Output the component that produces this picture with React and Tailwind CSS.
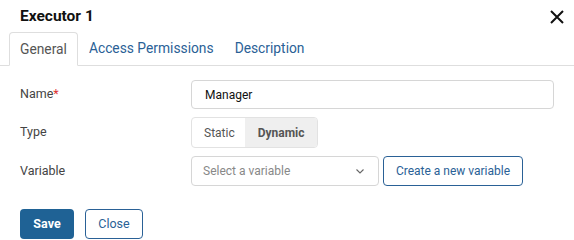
import React from "react";

export default function App() {
  return (
    <div className="w-[574px] h-[240px] bg-white overflow-hidden text-[12.5px] text-[#333]" style={{ fontFamily: "Roboto, 'Noto Sans', sans-serif" }}>
      <div className="flex items-center justify-between pl-[20px] pr-[10px] h-[32px] pt-[2px]">
        <div className="text-[15.5px] font-bold text-[#111]">Executor 1</div>
        <svg width="14" height="14" viewBox="0 0 14 14">
          <path d="M1 1 L13 13 M13 1 L1 13" stroke="#111" strokeWidth="2" />
        </svg>
      </div>
      <div className="flex border-b border-[#dedede] pl-[9px] h-[34px] text-[13.8px]">
        <div className="px-[10px] flex items-center border border-[#dedede] border-b-white rounded-t-[4px] -mb-px bg-white text-[#555]">General</div>
        <div className="pl-[11px] pr-[10px] flex items-center text-[#2a6196]">Access Permissions</div>
        <div className="px-[11px] flex items-center text-[#2a6196]">Description</div>
      </div>
      <div className="pl-[20px] pr-[20px] pt-[14px]">
        <div className="flex items-center h-[29px]">
          <div className="w-[171px] text-[#444]">Name<span className="text-[#d33]">*</span></div>
          <div className="flex-1 h-[29px] border border-[#d6d6d6] rounded-[4px] flex items-center px-[13px] text-[#111] text-[12px]">Manager</div>
        </div>
        <div className="flex items-center h-[31px] mt-[8px]">
          <div className="w-[171px] text-[#444]">Type</div>
          <div className="flex h-[31px] border border-[#e2e2e2] rounded-[4px] overflow-hidden text-[12px]">
            <div className="pl-[12px] pr-[10px] flex items-center text-[#555]">Static</div>
            <div className="pl-[13px] pr-[12px] flex items-center bg-[#efefef] font-bold text-[#555]">Dynamic</div>
          </div>
        </div>
        <div className="flex items-center h-[30px] mt-[8px]">
          <div className="w-[171px] text-[#444]">Variable</div>
          <div className="w-[188px] h-[30px] border border-[#d6d6d6] rounded-[4px] flex items-center justify-between pl-[11px] pr-[14px] text-[#888] text-[12px]">
            <span>Select a variable</span>
            <svg width="8" height="5" viewBox="0 0 8 5">
              <path d="M0.5 0.5 L4 4 L7.5 0.5" stroke="#666" strokeWidth="1.1" fill="none" />
            </svg>
          </div>
          <div className="ml-[4px] w-[140px] h-[30px] border border-[#2a6196] rounded-[4px] flex items-center justify-center text-[#2a6196] text-[12px]">Create a new variable</div>
        </div>
        <div className="flex mt-[23px] gap-[11px]">
          <div className="w-[54px] h-[30px] bg-[#1f6295] rounded-[4px] flex items-center justify-center text-white font-bold text-[12.5px]">Save</div>
          <div className="w-[58px] h-[30px] border border-[#2a6196] rounded-[4px] flex items-center justify-center text-[#2a6196] text-[12.5px]">Close</div>
        </div>
      </div>
    </div>
  );
}
